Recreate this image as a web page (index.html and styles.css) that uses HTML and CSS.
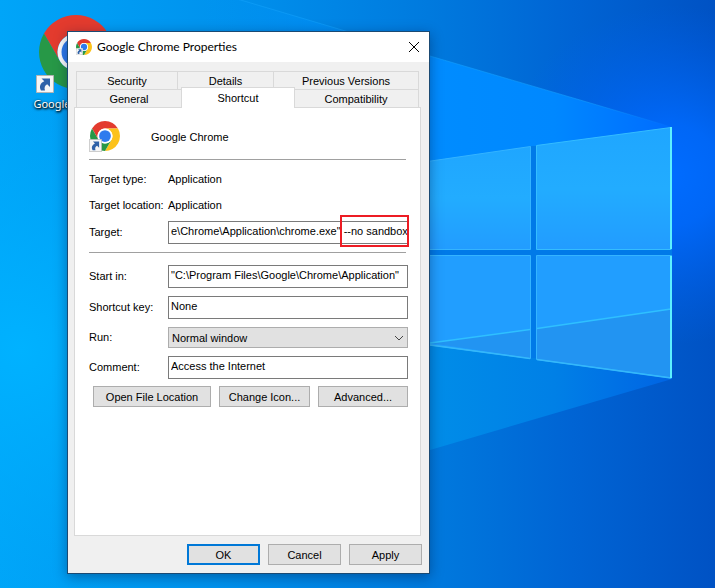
FILE: index.html
```html
<!DOCTYPE html>
<html lang="en">
<head>
<meta charset="utf-8">
<title>Google Chrome Properties</title>
<link rel="stylesheet" href="styles.css">
</head>
<body>
<svg class="defs" aria-hidden="true">
  <symbol id="chrome" viewBox="-24 -24 48 48">
    <path fill="#e33b2e" d="M-20.78-12A24 24 0 0 1 20.78-12L0-12A12 12 0 0 0-10.39 6Z"/>
    <path fill="#fcc21b" d="M20.78-12A24 24 0 0 1 0 24L10.39 6A12 12 0 0 0 0-12Z"/>
    <path fill="#279847" d="M0 24A24 24 0 0 1-20.78-12L-10.39 6A12 12 0 0 0 10.39 6Z"/>
    <circle r="12" fill="#fff"/>
    <circle r="9.4" fill="#2f7bee"/>
  </symbol>
  <symbol id="shortcut" viewBox="0 0 18 18">
    <path fill="#f6f6f6" stroke="#b4b4b4" d="M.5.5h17v17H.5z"/>
    <path fill="#2f62a8" d="M5.500 3.500H14v8.500l-2.800-2.700c-2.400 1.200-3.200 3.400-2.200 6.200H5C2.800 11.500 4.400 8 8.300 6.300z"/>
  </symbol>
</svg>
<main class="desktop">
  <svg class="wallpaper" viewBox="0 0 715 588" preserveAspectRatio="none" aria-hidden="true">
    <defs>
      <linearGradient id="sky" x1="0" y1="0" x2="1" y2="0">
        <stop offset="0" stop-color="#00a5f8"/>
        <stop offset=".3" stop-color="#0093ee"/>
        <stop offset=".6" stop-color="#007ade"/>
        <stop offset=".8" stop-color="#0064d4"/>
        <stop offset="1" stop-color="#0052c4"/>
      </linearGradient>
      <radialGradient id="glow" gradientUnits="userSpaceOnUse" cx="670" cy="175" r="170">
        <stop offset="0" stop-color="#006cff"/>
        <stop offset=".3" stop-color="#006aff" stop-opacity=".85"/>
        <stop offset="1" stop-color="#0060f0" stop-opacity="0"/>
      </radialGradient>
      <radialGradient id="left" gradientUnits="userSpaceOnUse" cx="20" cy="350" r="260">
        <stop offset="0" stop-color="#00b2ff"/>
        <stop offset="1" stop-color="#00a8fa" stop-opacity="0"/>
      </radialGradient>
      <linearGradient id="beam" gradientUnits="userSpaceOnUse" x1="200" y1="0" x2="672" y2="0">
        <stop offset="0" stop-color="#0098f8" stop-opacity="0"/>
        <stop offset=".5" stop-color="#008cff"/>
        <stop offset=".75" stop-color="#0088ff"/>
        <stop offset="1" stop-color="#006cff"/>
      </linearGradient>
      <linearGradient id="lowbeam" gradientUnits="userSpaceOnUse" x1="200" y1="0" x2="672" y2="0">
        <stop offset="0" stop-color="#0098f0" stop-opacity="0"/>
        <stop offset=".5" stop-color="#008ce8"/>
        <stop offset=".75" stop-color="#0080e6"/>
        <stop offset="1" stop-color="#0064e4"/>
      </linearGradient>
      <linearGradient id="pane" x1="0" y1="0" x2="0" y2="1">
        <stop offset="0" stop-color="#1fa6ff"/>
        <stop offset=".5" stop-color="#22acff"/>
        <stop offset="1" stop-color="#229cff"/>
      </linearGradient>
      <linearGradient id="edge" gradientUnits="userSpaceOnUse" x1="220" y1="0" x2="672" y2="0">
        <stop offset="0" stop-color="#18a8ff" stop-opacity=".4"/>
        <stop offset=".8" stop-color="#14a0ff" stop-opacity=".6"/>
        <stop offset="1" stop-color="#14a0ff" stop-opacity="0"/>
      </linearGradient>
    </defs>
    <path fill="url(#sky)" d="M0 0h715v588H0z"/>
    <path fill="url(#left)" d="M0 0h715v588H0z"/>
    <path fill="url(#glow)" d="M400 0h315v588H400z"/>
    <path fill="url(#beam)" d="M200-12L430 56 672 127V252H200z"/>
    <path fill="none" stroke="url(#edge)" d="M200-12L430 56 672 127"/>
    <path fill="url(#lowbeam)" d="M200 252H672V379L430 450 200 518z"/>
    <path fill="#007ae8" d="M400 249h272v7H400zM531 146h6v212h-6z"/>
    <path fill="url(#pane)" stroke="#34b4ff" d="M400 165.500L530.500 146.500V249.500H400z"/>
    <path fill="url(#pane)" stroke="#34bdff" d="M536.500 145.500L671 127.500V249.500H536.500z"/>
    <path fill="#219eff" stroke="#34b4ff" d="M400 255.500H530.500V358.500L400 341zM536.500 255.500H671.500V378L536.500 359.500z"/>
    <path fill="#2294f2" d="M430 343L530 329.500V358zM537 328.500L671 309V377L537 359z"/>
    <path fill="none" stroke="#2fc0ff" stroke-width="1.500" d="M430 343L530 329.500M537 328.500L671 309"/>
    <path fill="none" stroke="#35b8fa" stroke-width="1.500" d="M430 345L530 358.500M537 359.500L671 378"/>
    <path fill="none" stroke="#5cf0ff" stroke-width="2" d="M671 127V249M671 256V378"/>
  </svg>

  <div class="shortcut">
    <div class="shortcut-art">
      <svg class="shortcut-logo" aria-hidden="true"><use href="#chrome"/></svg>
      <svg class="shortcut-arrow" aria-hidden="true"><use href="#shortcut"/></svg>
    </div>
    <span>Google Chrome</span>
  </div>

  <section class="dialog">
    <header class="titlebar">
      <svg class="title-icon" aria-hidden="true"><use href="#chrome"/><use href="#shortcut" y="9" width="7" height="7"/></svg>
      <h1>Google Chrome Properties</h1>
      <button class="close" aria-label="Close">
        <svg viewBox="0 0 12 12" aria-hidden="true"><path d="M1 1l10 10M11 1L1 11"/></svg>
      </button>
    </header>

    <div class="content">
      <nav class="tabs">
        <div class="tab-row tab-row-back">
          <button class="tab">Security</button><button class="tab">Details</button><button class="tab">Previous Versions</button>
        </div>
        <div class="tab-row tab-row-front">
          <button class="tab">General</button><button class="tab active">Shortcut</button><button class="tab">Compatibility</button>
        </div>
      </nav>

      <form class="panel">
        <div class="app">
          <svg class="app-icon" aria-hidden="true"><use href="#chrome" x="1" width="30" height="30"/><use href="#shortcut" y="18" width="13" height="13"/></svg>
          <span>Google Chrome</span>
        </div>
        <hr>
        <div class="group facts">
          <div class="row text"><span>Target type:</span><span>Application</span></div>
          <div class="row text"><span>Target location:</span><span>Application</span></div>
          <div class="row"><label for="target">Target:</label>
            <div class="field"><input id="target" type="text" value='e\Chrome\Application\chrome.exe" --no sandbox'><i class="marker"></i></div></div>
        </div>
        <hr>
        <div class="group">
          <div class="row"><label for="start">Start in:</label><input id="start" type="text" value='"C:\Program Files\Google\Chrome\Application"'></div>
          <div class="row"><label for="key">Shortcut key:</label><input id="key" type="text" value="None"></div>
          <div class="row"><label for="run">Run:</label>
            <div class="field"><select id="run"><option>Normal window</option></select><svg class="chevron" viewBox="0 0 10 6" aria-hidden="true"><path d="M1 1l4 4 4-4"/></svg></div></div>
          <div class="row"><label for="comment">Comment:</label><input id="comment" type="text" value="Access the Internet"></div>
        </div>
        <div class="actions">
          <button type="button" class="btn wide">Open File Location</button>
          <button type="button" class="btn">Change Icon...</button>
          <button type="button" class="btn">Advanced...</button>
        </div>
      </form>
    </div>

    <footer class="footer">
      <button class="btn default">OK</button>
      <button class="btn">Cancel</button>
      <button class="btn">Apply</button>
    </footer>
  </section>
</main>
</body>
</html>
```
FILE: styles.css
```css
* { box-sizing: border-box; }
body { margin: 0; font: 11px/14px "Liberation Sans", sans-serif; color: #000; }
button, input, select { font: inherit; color: inherit; margin: 0; border-radius: 0; }
.defs { position: absolute; width: 0; height: 0; }

.desktop { position: relative; min-height: 100vh; overflow: hidden; background: #0078d8; }
.wallpaper { position: absolute; inset: 0; width: 100%; height: 100%; }

.shortcut { position: absolute; left: 28px; top: 15px; width: 92px; text-align: center; color: #fff; font: 11px/16px "Noto Sans", sans-serif; text-shadow: 1px 1px 2px #000, 0 1px 3px #000; }
.shortcut-art { position: relative; height: 81px; }
.shortcut-logo { width: 74px; height: 74px; margin-left: 4px; }
.shortcut-arrow { position: absolute; left: 8px; top: 60px; width: 18px; height: 18px; }

.dialog { position: absolute; left: 67px; top: 31px; width: 363px; display: flex; flex-direction: column; border: 1px solid #1b4a73; background: #f0f0f0; box-shadow: 0 3px 12px rgba(0, 20, 60, .4); }
.titlebar { display: flex; align-items: center; gap: 5px; height: 30px; padding: 0 8px; background: #fff; }
.titlebar h1 { flex: 1; margin: 0; font: 12px/16px Lato, sans-serif; }
.title-icon { width: 16px; height: 16px; }
.close { display: flex; align-items: center; justify-content: center; width: 14px; height: 14px; padding: 0; border: 0; background: none; }
.close svg { width: 12px; height: 12px; fill: none; stroke: #000; }

.content { padding: 9px 8px 8px 6px; }
.tabs { padding: 0 2px; }
.tab-row { display: grid; height: 18px; }
.tab-row-back { grid-template-columns: 102fr 96fr 145fr; }
.tab-row-front { grid-template-columns: 106fr 112fr 125fr; }
.tab { border: 1px solid #d9d9d9; border-width: 1px 1px 0 0; background: #f0f0f0; padding: 0; }
.tab:first-child { border-left-width: 1px; }
.tab.active { position: relative; margin: -2px -1px -1px; border-left-width: 1px; background: #fff; }

.panel { min-height: 429px; padding: 13px 12px 13px 14px; border: 1px solid #d9d9d9; background: #fff; }
.app { display: flex; align-items: center; gap: 30px; }
.app-icon { width: 32px; height: 32px; }
hr { height: 1px; margin: 6px 2px 0 0; border: 0; background: #a0a0a0; }
.group { display: grid; gap: 8px; margin-top: 12px; }
.facts { gap: 6px; margin: 9px 0 8px; }
.row { display: grid; grid-template-columns: 79px 1fr; align-items: center; }
.row.text { height: 20px; }
.row label { padding-bottom: 2px; }
.field { position: relative; display: grid; }
input { width: 100%; height: 23px; padding: 0 0 3px 2px; border: 1px solid #7a7a7a; background: #fff; }
select { width: 100%; height: 21px; padding: 0 3px; border: 1px solid #adadad; background: #e1e1e1; appearance: none; }
.chevron { position: absolute; right: 4px; top: 8px; width: 10px; height: 6px; fill: none; stroke: #444; pointer-events: none; }
.marker { position: absolute; right: -1px; top: -6px; width: 69px; height: 32px; border: 2px solid #ed1c24; pointer-events: none; }

.actions { display: grid; grid-template-columns: 118fr 91fr 90fr; gap: 8px; margin: 7px 0 0 4px; }
.btn { height: 21px; padding: 0; border: 1px solid #adadad; background: #e1e1e1; }
.btn.default { border: 2px solid #0078d7; }
.footer { display: flex; justify-content: flex-end; gap: 8px; padding: 0 7px 8px; }
.footer .btn { width: 73px; }
```
